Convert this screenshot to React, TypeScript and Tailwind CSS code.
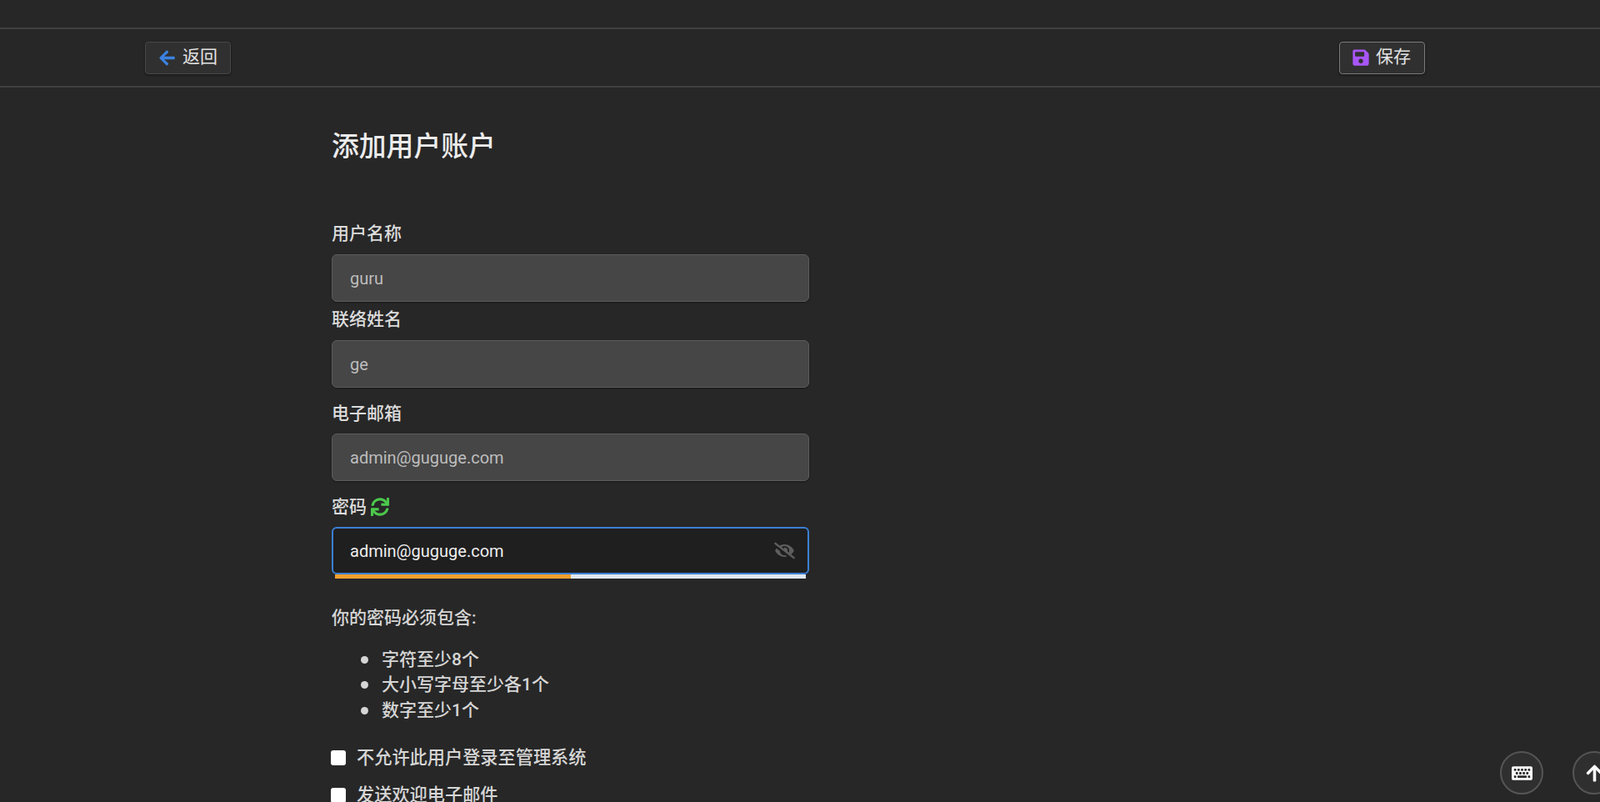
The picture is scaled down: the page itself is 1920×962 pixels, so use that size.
import { FaArrowLeft, FaArrowUp, FaEyeSlash, FaKeyboard, FaSave, FaSync } from 'react-icons/fa';

const font = { fontFamily: 'Roboto, "Noto Sans CJK SC", sans-serif' };

function Field({ label, value, className, inputGap }: { label: string; value: string; className: string; inputGap: string }) {
  return (
    <div className={className}>
      <label className="block h-[29px] text-[21px] leading-[29px] font-medium text-[#dcdcdc]">{label}</label>
      <input
        readOnly
        value={value}
        style={font}
        className={`${inputGap} block h-[57px] w-full rounded-[6px] border border-[#5c5c5c] bg-[#464646] px-[21px] text-[20px] text-[#bdbdbd] shadow-[0_1px_2px_rgba(0,0,0,0.4)] outline-none`}
      />
    </div>
  );
}

function ToolbarButton({ icon, text, className }: { icon: React.ReactNode; text: string; className: string }) {
  return (
    <button className={`flex h-[39px] items-center rounded-[4px] border bg-[#303030] pl-[15px] text-[21px] text-[#e2e2e2] shadow-[0_1px_3px_rgba(0,0,0,0.5)] ${className}`}>
      {icon}
      <span>{text}</span>
    </button>
  );
}

function Rule({ text }: { text: string }) {
  return (
    <li className="flex h-[30.5px] items-center gap-[16px]">
      <span className="h-[9px] w-[9px] rounded-full bg-[#d6d6d6]" />
      {text}
    </li>
  );
}

export default function App() {
  return (
    <div style={font} className="relative h-[962px] w-full overflow-hidden bg-[#272727]">
      <div className="h-[33px]" />
      <div className="flex h-[72px] items-center justify-between border-y-2 border-[#404040] pr-[210px] pl-[174px]">
        <ToolbarButton
          className="w-[103px] gap-[8px] border-[#484848]"
          icon={<FaArrowLeft className="text-[21px] text-[#3b82e0]" />}
          text="返回"
        />
        <ToolbarButton
          className="w-[103px] gap-[7px] border-[#7a7a7a]"
          icon={<FaSave className="-ml-px text-[22px] text-[#a855f7]" />}
          text="保存"
        />
      </div>

      <main className="ml-[398px] w-[573px]">
        <h1 className="mt-[47px] h-[48px] text-[32.8px] leading-[48px] font-medium text-[#ececec]">添加用户账户</h1>

        <Field className="mt-[66px]" inputGap="mt-[10px]" label="用户名称" value="guru" />
        <Field className="mt-[7px]" inputGap="mt-[10px]" label="联络姓名" value="ge" />
        <Field className="mt-[17px]" inputGap="mt-[9px]" label="电子邮箱" value="admin@guguge.com" />

        <div className="mt-[17px]">
          <label className="flex h-[29px] items-center gap-[6px] text-[21px] leading-[29px] font-medium text-[#dcdcdc]">
            密码 <FaSync className="-mt-px -ml-px text-[22px] text-[#4cc94c]" />
          </label>
          <div className="relative mt-[9px]">
            <input
              readOnly
              value="admin@guguge.com"
              style={font}
              className="block h-[57px] w-full rounded-[6px] border-2 border-[#3b7fd4] bg-[#1f1f1f] px-[20px] text-[20px] text-[#eeeeee] outline-none"
            />
            <FaEyeSlash className="absolute top-[16px] right-[17px] text-[25px] text-[#5e5e5e]" />
          </div>
          <div className="mx-[4px] flex h-[5px]">
            <div className="w-1/2 bg-[#f0a030]" />
            <div className="w-1/2 bg-[#dfe6ef]" />
          </div>
        </div>

        <p className="mt-[33px] h-[29px] text-[21px] leading-[29px] font-medium text-[#d6d6d6]">你的密码必须包含:</p>

        <ul className="mt-[20px] ml-[35px] text-[21px] font-medium text-[#d6d6d6]">
          <Rule text="字符至少8个" />
          <Rule text="大小写字母至少各1个" />
          <Rule text="数字至少1个" />
        </ul>

        <label className="mt-[27px] flex h-[29px] items-center gap-[13px] text-[21.2px] font-medium text-[#d6d6d6]">
          <span className="-ml-px h-[18px] w-[18px] rounded-[3px] bg-white" />
          不允许此用户登录至管理系统
        </label>
        <label className="mt-[16px] flex h-[29px] items-center gap-[13px] text-[21.2px] font-medium text-[#d6d6d6]">
          <span className="-ml-px h-[18px] w-[18px] rounded-[3px] bg-white" />
          发送欢迎电子邮件
        </label>
      </main>

      <button className="absolute top-[901px] left-[1800px] flex h-[52px] w-[52px] items-center justify-center rounded-full border-2 border-[#555555] bg-[#2f2f2f] text-[25px] text-white">
        <FaKeyboard />
      </button>
      <button className="absolute top-[901px] left-[1887px] flex h-[52px] w-[52px] items-center justify-center rounded-full border-2 border-[#555555] bg-[#2f2f2f] text-[23px] text-white">
        <FaArrowUp />
      </button>
    </div>
  );
}
